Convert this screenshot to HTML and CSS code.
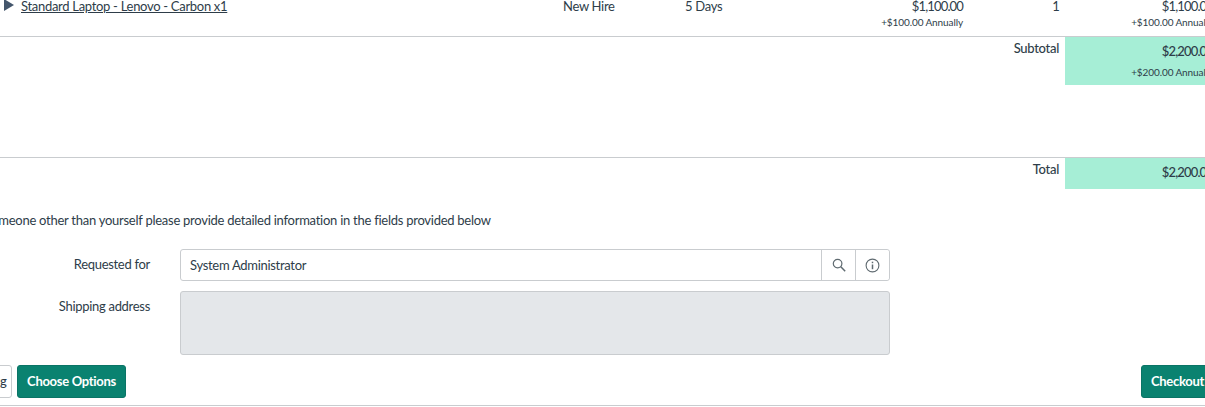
FILE: index.html
```html
<!DOCTYPE html>
<html lang="en">
<head>
    <meta charset="UTF-8">
    <meta name="viewport" content="width=device-width, initial-scale=1.0">
    <title>Order Summary</title>
    <link rel="stylesheet" href="styles.css">
</head>
<body>
    <div class="page">
        <!-- cart line -->
        <div class="row item-row">
            <div class="item-name">
                <span class="caret"></span>
                <a href="#">Standard Laptop - Lenovo - Carbon x1</a>
            </div>
            <div>New Hire</div>
            <div>5 Days</div>
            <div class="num">$1,100.00<small>+$100.00 Annually</small></div>
            <div class="num">1</div>
            <div class="num pad-total">$1,100.00<small>+$100.00 Annually</small></div>
        </div>

        <div class="row subtotal-row">
            <div class="sum-label">Subtotal</div>
            <div class="num sum-cell">$2,200.00<small>+$200.00 Annually</small></div>
        </div>

        <div class="row total-row">
            <div class="sum-label">Total</div>
            <div class="num sum-cell">$2,200.00</div>
        </div>

        <p class="note">If you are ordering for someone other than yourself please provide detailed information in the fields provided below</p>

        <div class="field">
            <label class="field-label">Requested for</label>
            <div class="lookup">
                <div class="lookup-input">System Administrator</div>
                <button class="lookup-btn" type="button">
                    <svg width="14" height="14" viewBox="0 0 14 14" fill="none" stroke="#5f6a70" stroke-width="1.2">
                        <circle cx="5.6" cy="5.6" r="4.3"/>
                        <path d="M8.8 8.8L13.2 13.2" stroke-width="1.5"/>
                    </svg>
                </button>
                <button class="lookup-btn" type="button">
                    <svg width="15" height="15" viewBox="0 0 15 15" fill="none" stroke="#5f6a70" stroke-width="1.1">
                        <circle cx="7.5" cy="7.5" r="6.4"/>
                        <path d="M7.5 6.5V11.2" stroke-width="1.5"/>
                        <path d="M7.5 3.7V5.2" stroke-width="1.5"/>
                    </svg>
                </button>
            </div>
        </div>

        <div class="field">
            <label class="field-label">Shipping address</label>
            <div class="address"></div>
        </div>

        <div class="actions">
            <div class="actions-left">
                <button class="btn btn-default" type="button">Continue Shopping</button>
                <button class="btn btn-primary" type="button">Choose Options</button>
            </div>
            <button class="btn btn-primary btn-checkout" type="button">Checkout</button>
        </div>
    </div>
</body>
</html>
```

FILE: styles.css
```css
html, body {
    margin: 0;
    height: 407px;
    overflow: hidden;
    background-color: #fff;
}

body {
    font-family: Lato, Arial, sans-serif;
    font-size: 13px;
    letter-spacing: -0.3px;
    color: #2e3d49;
}

.page {
    width: 1225px;
    margin-top: -4px;
}

.row {
    display: grid;
}

.item-row {
    height: 40px;
    line-height: 20px;
    border-bottom: 1px solid #c9cccf;
    grid-template-columns: 563px 122px 100px 178px 96px 166px;
}

.item-name {
    display: flex;
    align-items: center;
    height: 20px;
    gap: 7px;
    padding-left: 4px;
}

.item-name a {
    color: #2e3d49;
}

.caret {
    width: 0;
    height: 0;
    margin-top: -2px;
    border-top: 6px solid transparent;
    border-bottom: 6px solid transparent;
    border-left: 10px solid #44566c;
}

.num {
    text-align: right;
    letter-spacing: -0.85px;
}

.pad-total {
    padding-right: 12px;
}

small {
    display: block;
    font-size: 10px;
    letter-spacing: -0.1px;
    line-height: 20px;
    margin-top: -4px;
}

.subtotal-row,
.total-row {
    grid-template-columns: 1059px 6px 160px;
}

.sum-label {
    grid-column: 1;
    padding-top: 3px;
    text-align: right;
    font-weight: 500;
    line-height: 17px;
}

.sum-cell {
    grid-column: 3;
    background-color: #a6eed6;
    padding: 4px 12px 0 0;
    font-weight: 500;
    line-height: 20px;
}

.sum-cell small {
    font-weight: 400;
    margin-top: 1px;
}

.subtotal-row {
    height: 48px;
}

.subtotal-row .sum-cell {
    height: 44px;
}

.total-row {
    margin-top: 72px;
    border-top: 1px solid #c9cccf;
    height: 31px;
}

.note {
    margin: 22px 0 20px -135px;
    letter-spacing: -0.26px;
    line-height: 18px;
    white-space: nowrap;
}

.field {
    display: flex;
    gap: 30px;
    margin-bottom: 10px;
}

.field-label {
    width: 150px;
    text-align: right;
    line-height: 30px;
}

.lookup {
    display: flex;
    width: 710px;
    height: 32px;
    box-sizing: border-box;
    border: 1px solid #c9cccf;
    border-radius: 3px;
}

.lookup-input {
    flex: 1;
    padding-left: 9px;
    line-height: 30px;
}

.lookup-btn {
    width: 34px;
    padding: 0;
    background: #fff;
    border: 0;
    border-left: 1px solid #c9cccf;
    border-radius: 0 3px 3px 0;
    display: flex;
    align-items: center;
    justify-content: center;
}

.address {
    width: 710px;
    height: 64px;
    box-sizing: border-box;
    background-color: #e4e7ea;
    border: 1px solid #c9cccf;
    border-radius: 3px;
}

.actions {
    display: flex;
    justify-content: space-between;
    padding-bottom: 7px;
    border-bottom: 1px solid #c9cccf;
}

.actions-left {
    display: flex;
    gap: 5px;
    margin-left: -118px;
}

.btn {
    height: 33px;
    width: 130px;
    padding: 0 0 2px;
    font-family: inherit;
    font-size: 13px;
    letter-spacing: -0.3px;
    font-weight: 700;
    color: #2e3d49;
    background: #fff;
    border: 1px solid #c9cccf;
    border-radius: 3px;
}

.btn-default {
    padding-left: 15px;
    font-weight: 500;
}

.btn-primary {
    width: 109px;
    color: #fff;
    background-color: #0a8270;
    border-color: #0a7466;
}

.btn-checkout {
    width: 73px;
    margin-right: 11px;
}
```
